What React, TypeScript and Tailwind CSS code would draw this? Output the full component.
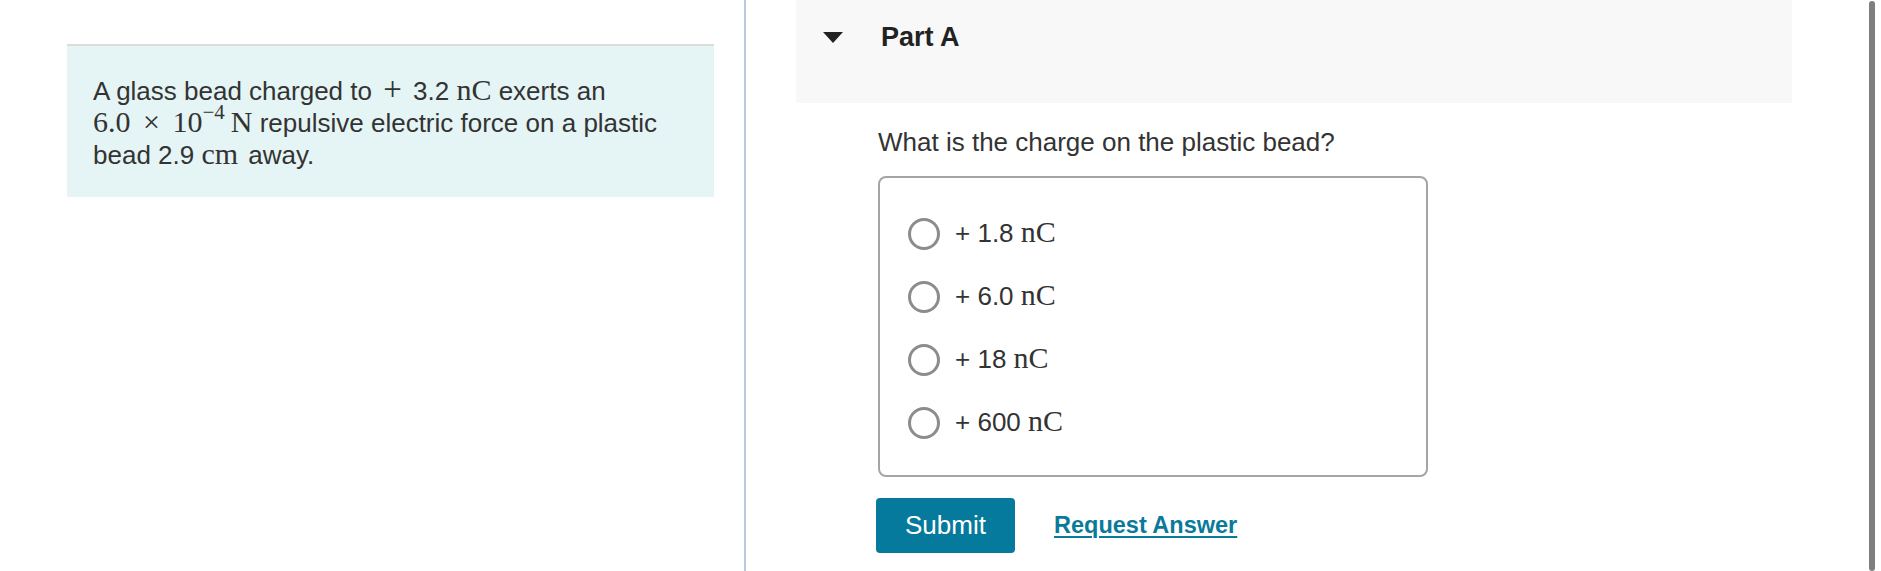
import * as React from "react";

const sans = { fontFamily: '"Liberation Sans", Arial, sans-serif' };

function M({ children, className = "" }: { children: React.ReactNode; className?: string }) {
    return (
        <span className={"font-['Liberation_Serif','Times_New_Roman',serif] text-[30px] leading-[0] " + className}>{children}</span>
    );
}

const options = ["1.8", "6.0", "18", "600"];

function Option({ value }: { value: string }) {
    return (
        <label className="flex items-center h-[31px]">
            <span className="w-[32px] h-[32px] rounded-full border-[3px] border-[#8c8c8c] bg-white shrink-0" />
            <span className="ml-[15px] text-[26px] text-[#333]">
                + {value} <M className="text-[29px]">nC</M>
            </span>
        </label>
    );
}

export default function App() {
    return (
        <div
            className="relative w-[1881px] h-[571px] bg-white overflow-hidden flex flex-row items-stretch font-['Liberation_Sans',Arial,sans-serif] text-[#333]"
            style={sans}
        >
            {/* Left: problem statement */}
            <section className="w-[744px] shrink-0 pt-[44px]">
                <div className="ml-[67px] w-[647px] border-t-2 border-[#dcdcdc] bg-[#e5f5f5] pl-[26px] pr-[20px] pt-[29px] pb-[26px]">
                    <p className="text-[26px] leading-[32px] text-[#333]">
                        A glass bead charged to <M className="text-[33px] mx-[4px]">+</M> 3.2 <M>nC</M> exerts an
                        <br />
                        <M>
                            6.0 <span className="mx-[5px]">×</span> 10<sup className="text-[21px] -top-[0.6em]">−4</sup>
                            <span className="ml-[6px]">N</span>
                        </M>{" "}
                        repulsive electric force on a plastic
                        <br />
                        bead 2.9 <M className="mr-[3px]">cm</M> away.
                    </p>
                </div>
            </section>

            {/* Divider */}
            <div className="w-[2px] shrink-0 bg-[#b5cadf]" />

            {/* Right: Part A */}
            <main className="flex-1 min-w-0 pl-[50px] pr-[89px]">
                <div className="h-[103px] bg-[#f8f8f8] pt-[21px]">
                    <div className="flex items-center h-[32px]">
                        <svg width="20" height="11" viewBox="0 0 20 11" className="ml-[27px] shrink-0">
                            <polygon points="0,0 20,0 10,11" fill="#222" />
                        </svg>
                        <h2 className="ml-[38px] text-[27px] leading-[32px] font-bold text-[#222]">Part A</h2>
                    </div>
                </div>

                <div className="pl-[82px] pt-[24px]">
                    <p className="text-[26px] leading-[30px] text-[#333]">What is the charge on the plastic bead?</p>

                    <div className="mt-[19px] w-[550px] h-[301px] rounded-[8px] border-2 border-[#a5a5a5] pl-[28px] pt-[40px] flex flex-col gap-[32px]">
                        {options.map((o) => (
                            <Option key={o} value={o} />
                        ))}
                    </div>

                    <div className="mt-[21px] flex items-center">
                        <button className="-ml-[2px] w-[139px] h-[55px] rounded-[4px] bg-[#057a9c] text-white text-[26px]">
                            Submit
                        </button>
                        <a className="ml-[39px] text-[23.5px] font-bold text-[#0a7a9b] underline underline-offset-[3px] decoration-2">
                            Request Answer
                        </a>
                    </div>
                </div>
            </main>

            {/* Scrollbar thumb */}
            <div className="absolute top-[1px] bottom-0 right-[6px] w-[6px] rounded-full bg-[#7f7f7f]" />
        </div>
    );
}
